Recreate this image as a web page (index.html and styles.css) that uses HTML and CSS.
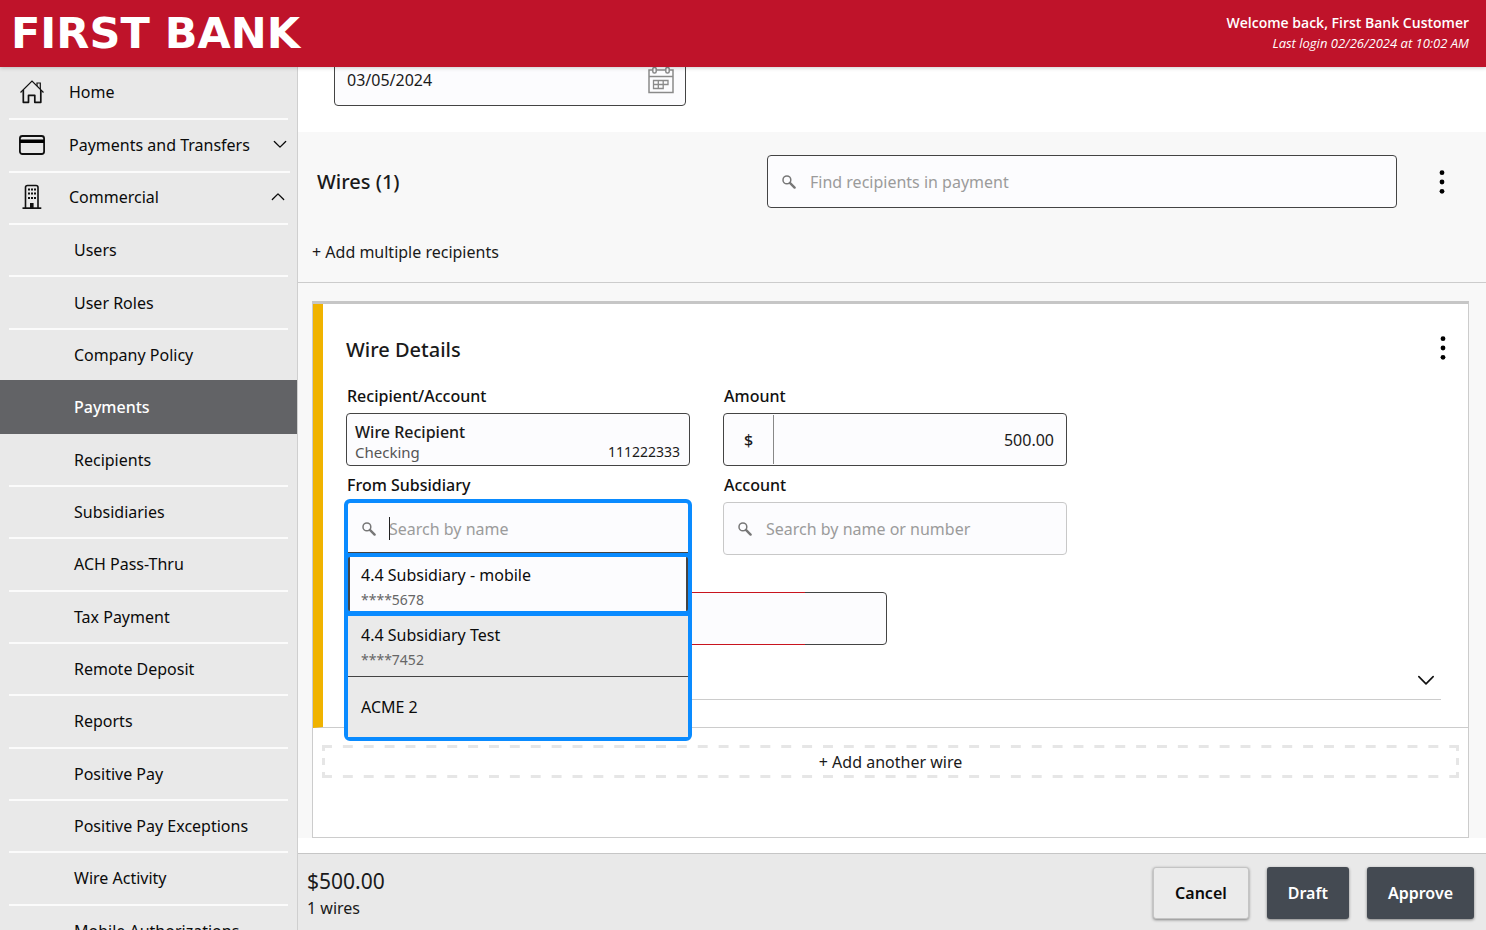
FILE: index.html
```html
<!DOCTYPE html>
<html lang="en">
<head>
<meta charset="utf-8">
<title>First Bank - Payments</title>
<link rel="stylesheet" href="styles.css">
</head>
<body>
<svg class="defs" width="0" height="0" aria-hidden="true">
  <symbol id="search" viewBox="0 0 14 14">
    <circle cx="4.9" cy="4.9" r="3.9" fill="none" stroke="currentColor" stroke-width="1.5"/>
    <path d="M7.9 7.9 12.6 12.6" stroke="currentColor" stroke-width="2.4" stroke-linecap="round"/>
  </symbol>
  <symbol id="down" viewBox="0 0 16 10">
    <path d="M1.5 1.5 8 8l6.500-6.500" fill="none" stroke="currentColor" stroke-width="1.500" stroke-linecap="round" stroke-linejoin="round"/>
  </symbol>
  <symbol id="kebab" viewBox="0 0 6 24">
    <circle cx="3" cy="2.700" r="2.400"/><circle cx="3" cy="12" r="2.400"/><circle cx="3" cy="21.300" r="2.400"/>
  </symbol>
</svg>
<header class="topbar">
  <div class="logo">FIRST BANK</div>
  <div class="welcome">
    <p class="welcome-name">Welcome back, First Bank Customer</p>
    <p class="welcome-login">Last login 02/26/2024 at 10:02 AM</p>
  </div>
</header>
<div class="shell">
  <nav class="sidebar" aria-label="Main">
    <ul class="menu">
      <li><a class="item top" href="#">
        <svg class="item-icon" viewBox="0 0 28 28" fill="none" stroke="#111"><path d="M2.500 14.500 14 3l11.500 11.500" stroke-width="1.200"/><path d="M19 8V5h3.300v6" stroke-width="1.200"/><path d="M5.300 12v12.300h5.200v-7h6.300v7h6V12" stroke-width="1.700" stroke-linejoin="round"/></svg>
        <span>Home</span></a></li>
      <li><a class="item top" href="#">
        <svg class="item-icon" viewBox="0 0 28 28"><rect x="1.900" y="5" width="24.200" height="18" rx="2.500" fill="none" stroke="#111" stroke-width="1.800"/><path d="M2 8.500h24v3.500H2z" fill="#000"/></svg>
        <span>Payments and Transfers</span><svg class="chev" viewBox="0 0 16 10"><use href="#down"/></svg></a></li>
      <li><a class="item top" href="#">
        <svg class="item-icon" viewBox="0 0 28 28" fill="#111"><path d="M7.500 25V4.500q0-2 2-2h8.500q2 0 2 2V25" fill="none" stroke="#111" stroke-width="1.600"/><path d="M4.500 24.300h18.800V26H4.500z"/><path d="M12 25v-5h3.600v5z"/><path d="M10 5.500h2v2h-2zM13 5.500h2v2h-2zM16 5.500h2v2h-2zM10 9.500h2v2h-2zM13 9.500h2v2h-2zM16 9.500h2v2h-2zM10 14h2v2h-2zM13 14h2v2h-2zM16 14h2v2h-2z"/></svg>
        <span>Commercial</span><svg class="chev up" viewBox="0 0 16 10"><use href="#down"/></svg></a></li>
      <li><a class="item" href="#">Users</a></li>
      <li><a class="item" href="#">User Roles</a></li>
      <li><a class="item" href="#">Company Policy</a></li>
      <li class="active"><a class="item" href="#" aria-current="page">Payments</a></li>
      <li><a class="item" href="#">Recipients</a></li>
      <li><a class="item" href="#">Subsidiaries</a></li>
      <li><a class="item" href="#">ACH Pass-Thru</a></li>
      <li><a class="item" href="#">Tax Payment</a></li>
      <li><a class="item" href="#">Remote Deposit</a></li>
      <li><a class="item" href="#">Reports</a></li>
      <li><a class="item" href="#">Positive Pay</a></li>
      <li><a class="item" href="#">Positive Pay Exceptions</a></li>
      <li><a class="item" href="#">Wire Activity</a></li>
      <li><a class="item" href="#">Mobile Authorizations</a></li>
    </ul>
  </nav>
  <main class="main">
    <section class="date-section">
      <div class="field date-field">
        <input type="text" aria-label="Effective date" value="03/05/2024">
        <svg class="cal" viewBox="0 0 28 28" fill="none" stroke="#8a8a8a" stroke-width="1.500"><path d="M5.500 4H2v22.500h24V4h-3.500M9.500 4h9M2 10.500h24"/><rect x="5.800" y="1.500" width="3.400" height="5.500" rx="1.500"/><rect x="18.800" y="1.500" width="3.400" height="5.500" rx="1.500"/><path d="M6.500 14.500h14.500v4H6.500zM6.500 18.500h9.700v4H6.500zM11.300 14.500v8M16.200 14.500v4" stroke-width="1.300"/></svg>
      </div>
    </section>
    <section class="wires">
      <div class="wires-head">
        <h2 class="title">Wires (1)</h2>
        <div class="field find">
          <svg class="mag" viewBox="0 0 14 14"><use href="#search"/></svg>
          <input type="text" aria-label="Find recipients in payment" placeholder="Find recipients in payment">
        </div>
        <button class="kebab" type="button" aria-label="Wires options"><svg viewBox="0 0 6 24"><use href="#kebab"/></svg></button>
      </div>
      <button class="link-btn" type="button">+ Add multiple recipients</button>
    </section>
    <section class="stage">
      <div class="card">
        <form class="panel">
          <div class="panel-head">
            <h3 class="title">Wire Details</h3>
            <button class="kebab" type="button" aria-label="Wire options"><svg viewBox="0 0 6 24"><use href="#kebab"/></svg></button>
          </div>
          <div class="fields">
            <div class="cell">
              <label id="recipient-label">Recipient/Account</label>
              <button class="field recipient" type="button" aria-labelledby="recipient-label">
                <span class="recipient-name">Wire Recipient</span>
                <span class="recipient-row"><span class="muted">Checking</span><span class="recipient-num">111222333</span></span>
              </button>
            </div>
            <div class="cell">
              <label for="amount">Amount</label>
              <div class="field amount"><span class="currency">$</span><input id="amount" type="text" value="500.00"></div>
            </div>
            <div class="cell left-col">
              <label for="subsidiary">From Subsidiary</label>
              <div class="combo-slot">
                <div class="combo">
                  <div class="combo-search">
                    <svg class="mag" viewBox="0 0 14 14"><use href="#search"/></svg>
                    <input id="subsidiary" type="text" placeholder="Search by name">
                    <span class="caret"></span>
                  </div>
                  <ul class="options" role="listbox" aria-label="Subsidiaries">
                    <li class="option current" role="option" aria-selected="true"><span>4.4 Subsidiary - mobile</span><span class="option-num">****5678</span></li>
                    <li class="option" role="option"><span>4.4 Subsidiary Test</span><span class="option-num">****7452</span></li>
                    <li class="option" role="option"><span>ACME 2</span></li>
                  </ul>
                </div>
              </div>
            </div>
            <div class="cell">
              <label for="account">Account</label>
              <div class="field soft">
                <svg class="mag" viewBox="0 0 14 14"><use href="#search"/></svg>
                <input id="account" type="text" placeholder="Search by name or number">
              </div>
            </div>
          </div>
          <div class="field purpose"><input type="text" aria-label="Purpose"></div>
          <div class="optional"><button class="expand" type="button" aria-label="Expand"><svg viewBox="0 0 16 10"><use href="#down"/></svg></button></div>
        </form>
        <div class="add-area"><button class="add-wire" type="button">+ Add another wire</button></div>
      </div>
    </section>
    <footer class="footer">
      <div class="totals"><p class="total">$500.00</p><p>1 wires</p></div>
      <div class="actions">
        <button class="btn plain" type="button">Cancel</button>
        <button class="btn" type="button">Draft</button>
        <button class="btn" type="button">Approve</button>
      </div>
    </footer>
  </main>
</div>
</body>
</html>
```
FILE: styles.css
```css
* { box-sizing: border-box; }
body {
  margin: 0;
  height: 100vh;
  display: flex;
  flex-direction: column;
  overflow: hidden;
  font: 16px/22px "Noto Sans", "Open Sans", sans-serif;
  color: #1a1a1a;
  background: #fff;
}
h2, h3, p, ul { margin: 0; padding: 0; }
ul { list-style: none; }
button, input { font: inherit; color: inherit; }
button { border: 0; background: none; padding: 0; cursor: pointer; }
svg { display: block; flex: none; }
.defs { position: absolute; }

.topbar {
  position: relative;
  z-index: 2;
  flex: none;
  height: 67px;
  padding: 0 17px 0 11px;
  display: flex;
  align-items: center;
  justify-content: space-between;
  background: #bf132a;
  color: #fff;
  box-shadow: 0 1px 4px rgba(0, 0, 0, .2);
}
.logo { font: bold 43px/48px "DejaVu Sans", sans-serif; padding-bottom: 2px; }
.welcome { text-align: right; font-family: "Open Sans", "Noto Sans", sans-serif; font-size: 14px; line-height: 20px; padding-bottom: 2px; }
.welcome-name { font-weight: 600; }
.welcome-login { font-style: italic; font-size: 13px; }

.shell { flex: 1; min-height: 0; display: grid; grid-template-columns: 298px minmax(0, 1fr); }
.sidebar { background: #e9e9e9; border-right: 1px solid #cfcfcf; overflow: hidden; padding-top: 1px; }
.menu { height: calc(100% + 28px); display: grid; grid-template-columns: minmax(0, 1fr); grid-auto-rows: 1fr; }
.menu li { padding: 0 9px; display: flex; }
.item {
  flex: 1;
  display: flex;
  align-items: center;
  padding: 0 0 0 65px;
  border-bottom: 2px solid #fbfbfb;
  color: #0b0b0b;
  text-decoration: none;
  white-space: nowrap;
}
.item.top { padding: 0 3px 2px 9px; gap: 23px; }
.item-icon { width: 28px; height: 28px; }
.chev { width: 14px; height: 9px; margin-left: auto; }
.up { transform: rotate(180deg); }
.menu .active { background: #626366; margin-top: -2px; padding-top: 2px; }
.active .item { color: #fff; border-color: #626366; font-weight: 500; }

.main { display: flex; flex-direction: column; min-width: 0; min-height: 0; }
.date-section { height: 65px; padding: 0 36px 26px; display: flex; align-items: flex-end; overflow: hidden; }
.field {
  height: 53px;
  display: flex;
  align-items: center;
  border: 1px solid #444;
  border-radius: 4px;
  background: #fcfcfe;
}
.field input, .combo-search input {
  flex: 1;
  min-width: 0;
  height: 100%;
  border: 0;
  padding: 0;
  background: none;
  outline: none;
}
input::placeholder { color: #9b9b9b; opacity: 1; }
.date-field { width: 352px; padding: 0 10px 0 12px; }
.cal { width: 28px; height: 28px; }
.mag { width: 14px; height: 14px; margin: 0 14px; color: #777; }

.wires { background: #f8f8f8; border-bottom: 1px solid #ccc; padding: 23px 30px 19px 14px; }
.wires-head { display: grid; grid-template-columns: 5fr 7fr 59px; align-items: center; padding-left: 5px; }
.title { font-size: 20px; line-height: 28px; font-weight: 500; }
.kebab { width: 28px; height: 24px; display: flex; align-items: center; justify-content: center; justify-self: end; }
.kebab svg { width: 6px; height: 24px; }
.link-btn { display: block; margin-top: 33px; line-height: 22px; }

.stage { background: #f8f8f8; padding: 18px 17px 0 14px; margin-bottom: 15px; flex: 1; display: flex; }
.card { flex: 1; display: flex; flex-direction: column; background: #fff; border: 1px solid #ccc; border-top: 3px solid #c6c6c6; }
.panel { border-left: 10px solid #f0b300; border-bottom: 1px solid #ccc; padding: 32px 27px 27px 23px; }
.panel-head { display: flex; justify-content: space-between; margin-right: -16px; }
.fields { margin: 21px -3px 0 0; display: grid; grid-template-columns: repeat(3, minmax(0, 1fr)); gap: 8px 33px; }
.left-col { grid-column: 1; }
.cell { display: flex; flex-direction: column; gap: 6px; }
.cell label { font-weight: 500; padding-left: 1px; color: #111; }
.recipient { flex-direction: column; align-items: stretch; justify-content: center; padding: 4px 9px 0 8px; text-align: left; line-height: 20px; }
.recipient-row { display: flex; justify-content: space-between; }
.recipient-num { font-size: 14px; }
.muted { color: #555; font-size: 15px; }
.recipient-name { font-weight: 500; }
.currency { width: 50px; align-self: stretch; margin: 1px 0; display: flex; align-items: center; justify-content: center; border-right: 1px solid #888; font-weight: 500; }
.amount input { text-align: right; padding-right: 12px; }
.soft { border-color: #c8c8c8; }
.combo-slot { position: relative; height: 53px; }
.combo {
  position: absolute;
  z-index: 1;
  inset: -3px -2px auto;
  border: 4px solid #0a8bff;
  border-radius: 6px;
  background: #0a8bff;
}
.combo-search { position: relative; height: 50px; padding-top: 2px; display: flex; align-items: center; background: #fcfcfe; border-bottom: 1px solid #444; border-radius: 2px 2px 0 0; }
.combo-search .mag { margin-right: 13px; }
.caret { position: absolute; left: 41px; top: 14px; width: 1px; height: 23px; background: #222; }
.options { display: grid; gap: 1px; padding-top: 4px; }
.option { height: 60px; padding: 3px 13px 0; display: flex; flex-direction: column; justify-content: center; gap: 3px; background: #eaeaea; color: #0b0b0b; }
.option.current { height: 54px; margin-bottom: 4px; padding: 7px 11px 0; background: #fcfcfe; border: solid #444; border-width: 0 2px; border-radius: 2px; }
.option + .option + .option { padding-top: 0; box-shadow: 0 -1px #444; }
.option-num { font-size: 14px; color: #666; }
.purpose { position: relative; margin-top: 37px; width: calc(50% - 7px); }
.purpose::before {
  content: "";
  position: absolute;
  inset: -1px 15% -1px -1px;
  border: 1px solid #c8141e;
  border-right: 0;
  border-radius: 4px 0 0 4px;
  pointer-events: none;
}
.optional { height: 55px; border-bottom: 1px solid #ccc; display: flex; justify-content: flex-end; align-items: center; padding: 16px 6px 0; }
.expand svg { width: 18px; height: 11px; color: #111; }
.add-area { flex: 1; padding: 17px 9px 0; }
.add-wire {
  --dash: linear-gradient(to right, #e6e6e6 48%, transparent 48%);
  --solid: linear-gradient(#e6e6e6, #e6e6e6);
  --side: linear-gradient(#e6e6e6 6px, transparent 6px 13px, #e6e6e6 13px 20px, transparent 20px 27px, #e6e6e6 27px);
  width: 100%;
  height: 33px;
  padding: 0 9px 0 0;
  text-indent: 9px;
  background:
    var(--dash) left top / 21px 3px round no-repeat content-box,
    var(--dash) left bottom / 21px 3px round no-repeat content-box,
    var(--solid) right top / 9px 3px no-repeat border-box,
    var(--solid) right bottom / 9px 3px no-repeat border-box,
    var(--side) left top / 3px 33px no-repeat border-box,
    var(--side) right top / 3px 33px no-repeat border-box;
}

.footer { flex: none; height: 77px; background: #e9e9e9; border-top: 1px solid #c6c6c6; display: flex; align-items: center; justify-content: space-between; padding: 1px 12px 0 9px; }
.total { font-size: 21px; line-height: 28px; }
.totals { padding-top: 2px; line-height: 26px; }
.actions { display: flex; gap: 18px; }
.btn { height: 52px; padding: 0 21px; border-radius: 3px; background: #444a52; color: #fff; font-weight: 600; box-shadow: 0 1px 3px rgba(0, 0, 0, .45); }
.btn.plain { background: #ebebeb; color: #0b0b0b; border: 1px solid #c4c4c4; }
```
